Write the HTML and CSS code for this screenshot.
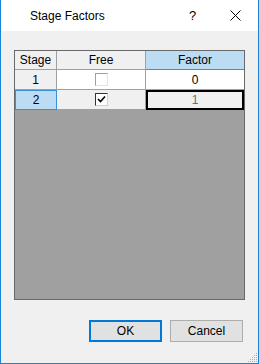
FILE: index.html
```html
<!DOCTYPE html>
<html>

<head>
  <title>Stage Factors</title>
  <link rel="stylesheet" href="styles.css">
</head>

<body>
  <div class="window">
    <div class="titlebar">
      <span class="title">Stage Factors</span>
      <span class="help">?</span>
      <span class="close">
        <svg width="11" height="11" viewBox="0 0 11 11">
          <path d="M0.5 0.5 L10.5 10.5 M10.5 0.5 L0.5 10.5" stroke="#000" stroke-width="1" fill="none" />
        </svg>
      </span>
    </div>

    <div class="content">
      <div class="grid">
        <div class="row header">
          <div class="cell stage">Stage</div>
          <div class="cell free">Free</div>
          <div class="cell factor active-col">Factor</div>
        </div>
        <div class="row">
          <div class="cell stage">1</div>
          <div class="cell free white"><span class="checkbox"></span></div>
          <div class="cell factor white">0</div>
        </div>
        <div class="row">
          <div class="cell stage selected">2</div>
          <div class="cell free"><span class="checkbox checked">
              <svg width="9" height="9" viewBox="0 0 9 9">
                <path d="M1 4 L3.5 6.5 L8 1.5" stroke="#000" stroke-width="1.6" fill="none" />
              </svg>
            </span></div>
          <div class="cell factor focused">1</div>
        </div>
      </div>

      <div class="buttons">
        <button class="btn default">OK</button>
        <button class="btn">Cancel</button>
      </div>
    </div>

    <!-- resize grip -->
    <svg class="grip" width="11" height="11" viewBox="0 0 11 11">
      <g fill="#b0b0b0">
        <rect x="9" y="1" width="1" height="1" />
        <rect x="7" y="3" width="1" height="1" />
        <rect x="9" y="3" width="1" height="1" />
        <rect x="5" y="5" width="1" height="1" />
        <rect x="7" y="5" width="1" height="1" />
        <rect x="9" y="5" width="1" height="1" />
        <rect x="3" y="7" width="1" height="1" />
        <rect x="5" y="7" width="1" height="1" />
        <rect x="7" y="7" width="1" height="1" />
        <rect x="9" y="7" width="1" height="1" />
        <rect x="1" y="9" width="1" height="1" />
        <rect x="3" y="9" width="1" height="1" />
        <rect x="5" y="9" width="1" height="1" />
        <rect x="7" y="9" width="1" height="1" />
        <rect x="9" y="9" width="1" height="1" />
      </g>
    </svg>
  </div>
</body>

</html>
```
FILE: styles.css
```css
:root {
  --accent: #1883d7;
  --face: #f0f0f0;
  --line: #a0a0a0;
  --select: #bcdcf4;
}

* {
  box-sizing: border-box;
  margin: 0;
  padding: 0;
}

body {
  font-family: 'Liberation Sans', Arial, sans-serif;
  font-size: 12px;
  color: #000;
  background: var(--face);
}

.window {
  position: relative;
  width: 259px;
  height: 364px;
  background: var(--face);
  border: 1px solid var(--accent);
  border-top: none;
  display: flex;
  flex-direction: column;
}

.titlebar {
  height: 31px;
  background: #fff;
  display: flex;
  align-items: center;
}

.title {
  margin-left: 29px;
  flex: 1;
  font-size: 12px;
}

.help {
  width: 14px;
  margin-right: 27px;
  font-size: 13px;
}

.close {
  width: 11px;
  height: 11px;
  margin-right: 17px;
  display: flex;
}

.content {
  flex: 1;
  padding: 19px 14px 0 13px;
  display: flex;
  flex-direction: column;
}

.grid {
  height: 250px;
  width: 231px;
  border: 1px solid #696969;
  background: #a0a0a0;
}

.row {
  display: flex;
  height: 20px;
}

.row.header {
  height: 19px;
}

.cell {
  display: flex;
  align-items: center;
  justify-content: center;
  background: var(--face);
  border-right: 1px solid var(--line);
  border-bottom: 1px solid var(--line);
}

.cell.stage {
  width: 42px;
}

.cell.free {
  width: 89px;
}

.cell.factor {
  width: 98px;
  border-right: none;
}

.cell.white {
  background: #fff;
}

.cell.active-col {
  background: var(--select);
  border-bottom: 1px solid #3a8fd8;
}

.cell.selected {
  background: var(--select);
  border: 1px solid #3a8fd8;
}

.cell.focused {
  border: 2px solid #000;
  color: #6d6d6d;
}

.checkbox {
  width: 13px;
  height: 13px;
  background: #fff;
  border: 1px solid;
  border-color: #a0a0a0 #e3e3e3 #e3e3e3 #a0a0a0;
  display: flex;
  align-items: center;
  justify-content: center;
}

.checkbox.checked {
  border-color: #333 #d0d0d0 #d0d0d0 #333;
}

.buttons {
  display: flex;
  justify-content: flex-end;
  gap: 8px;
  margin-top: 20px;
  padding-right: 1px;
}

.btn {
  width: 73px;
  height: 22px;
  font-family: inherit;
  font-size: 12px;
  background: #e1e1e1;
  border: 1px solid #adadad;
  color: #000;
}

.btn.default {
  border: 2px solid #0078d7;
}

.grip {
  position: absolute;
  right: 0;
  bottom: 0;
}
```
